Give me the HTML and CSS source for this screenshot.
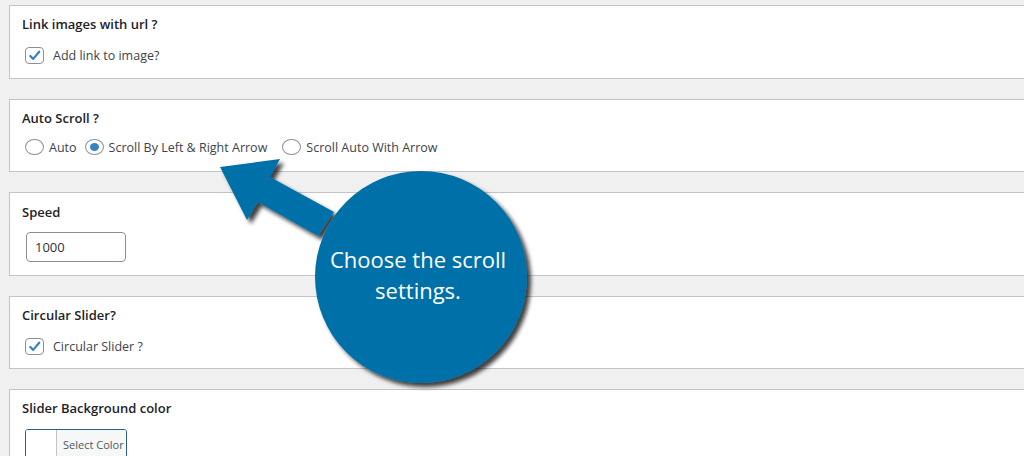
FILE: index.html
```html
<!DOCTYPE html>
<html lang="en">
<head>
<meta charset="utf-8">
<title>Slider settings</title>
<link rel="stylesheet" href="styles.css">
</head>
<body>
<div class="page">
  <section class="card card-link">
    <h3 class="card-title">Link images with url ?</h3>
    <label class="option">
      <span class="checkbox checked"><svg viewBox="0 0 20 20" width="18" height="17"><path d="M5 10.5 L8.5 14 L15.5 5.5" fill="none" stroke="#3582c4" stroke-width="2.6" stroke-linecap="round" stroke-linejoin="round"/></svg></span>
      <span class="option-label">Add link to image?</span>
    </label>
  </section>

  <section class="card card-scroll">
    <h3 class="card-title">Auto Scroll ?</h3>
    <div class="radios">
      <label class="option radio-option"><span class="radio"></span><span class="option-label">Auto</span></label>
      <label class="option radio-option"><span class="radio checked"></span><span class="option-label">Scroll By Left &amp; Right Arrow</span></label>
      <label class="option radio-option"><span class="radio"></span><span class="option-label">Scroll Auto With Arrow</span></label>
    </div>
  </section>

  <section class="card card-speed">
    <h3 class="card-title">Speed</h3>
    <div class="text-input">1000</div>
  </section>

  <section class="card card-circular">
    <h3 class="card-title">Circular Slider?</h3>
    <label class="option">
      <span class="checkbox checked"><svg viewBox="0 0 20 20" width="18" height="17"><path d="M5 10.5 L8.5 14 L15.5 5.5" fill="none" stroke="#3582c4" stroke-width="2.6" stroke-linecap="round" stroke-linejoin="round"/></svg></span>
      <span class="option-label">Circular Slider ?</span>
    </label>
  </section>

  <section class="card card-color">
    <h3 class="card-title">Slider Background color</h3>
    <div class="color-button"><span class="swatch"></span><span class="color-text">Select Color</span></div>
  </section>
</div>

<svg class="callout" width="1024" height="456" viewBox="0 0 1024 456" xmlns="http://www.w3.org/2000/svg">
  <defs>
    <filter id="shadow" x="-20%" y="-20%" width="140%" height="140%">
      <feDropShadow dx="4" dy="4" stdDeviation="2.2" flood-color="#000" flood-opacity="0.75"/>
    </filter>
  </defs>
  <g filter="url(#shadow)" fill="#0071a8">
    <path d="M220 167 L280 159 L270 177 L334 212 L318 236 L258 202 L247 220 Z"/>
    <circle cx="421" cy="277" r="106"/>
  </g>
  <text class="callout-text" x="418" y="268" text-anchor="middle">Choose the scroll</text>
  <text class="callout-text" x="418" y="299" text-anchor="middle">settings.</text>
</svg>
</body>
</html>
```

FILE: styles.css
```css
html, body {
  margin: 0;
  padding: 0;
  background: #f0f0f1;
  overflow: hidden;
  width: 1024px;
  height: 456px;
  font-family: "Open Sans", "Noto Sans", "Liberation Sans", sans-serif;
  color: #3c434a;
}

.page {
  display: flex;
  flex-direction: column;
  gap: 20px;
  padding: 5px 0 0 9px;
  margin-right: -20px;
}

.card {
  background: #fff;
  border: 1px solid #c3c4c7;
  padding: 8px 12px 11px 12px;
  display: flex;
  flex-direction: column;
  align-items: flex-start;
}

.card-title {
  margin: 0;
  font-size: 13px;
  line-height: 20px;
  font-weight: 600;
  color: #1d2327;
}

.option {
  display: flex;
  align-items: center;
  height: 24px;
  margin-top: 9px;
  margin-left: 3px;
  font-size: 12.5px;
  color: #3c434a;
}

.checkbox {
  box-sizing: border-box;
  width: 19px;
  height: 17px;
  border: 1px solid #8c8f94;
  border-radius: 4px;
  display: flex;
  align-items: center;
  justify-content: center;
  margin-right: 9px;
  background: #fff;
}

.checkbox svg {
  display: block;
}

.card-scroll {
  padding-bottom: 12px;
}

.radios {
  display: flex;
  align-items: center;
  margin-top: 7px;
  gap: 8px;
}

.radios .option {
  margin-top: 0;
  margin-left: 0;
}

.radios .option:first-child {
  margin-left: 3px;
}

.radio-option + .radio-option:last-child {
  margin-left: 7px;
}

.radio {
  box-sizing: border-box;
  width: 19px;
  height: 16px;
  border: 1px solid #8c8f94;
  border-radius: 50%;
  margin-right: 5px;
  position: relative;
  background: #fff;
}

.radio.checked::after {
  content: "";
  position: absolute;
  left: 4px;
  top: 3px;
  width: 9px;
  height: 8px;
  border-radius: 50%;
  background: #3582c4;
}

.card-speed {
  padding-top: 9px;
  padding-bottom: 13px;
}

.text-input {
  box-sizing: border-box;
  margin-top: 10px;
  margin-left: 4px;
  width: 100px;
  height: 30px;
  border: 1px solid #8c8f94;
  border-radius: 4px;
  padding: 0 8px;
  font-size: 13px;
  line-height: 28px;
  color: #2c3338;
}

.card-circular {
  padding-bottom: 10px;
}

.color-button {
  box-sizing: border-box;
  margin-top: 11px;
  margin-left: 3px;
  width: 102px;
  height: 40px;
  border: 1px solid #2c5f8a;
  border-radius: 3px;
  display: flex;
  overflow: hidden;
}

.swatch {
  width: 30px;
  background: #fff;
  border-right: 1px solid #c3c4c7;
}

.color-text {
  flex: 1;
  background: #f6f7f7;
  font-size: 11px;
  color: #50575e;
  padding: 7px 0 0 6px;
}

.callout {
  position: absolute;
  left: 0;
  top: 0;
  pointer-events: none;
}

.callout-text {
  fill: #fff;
  font-family: "Open Sans", "Noto Sans", sans-serif;
  font-size: 22px;
}
```
